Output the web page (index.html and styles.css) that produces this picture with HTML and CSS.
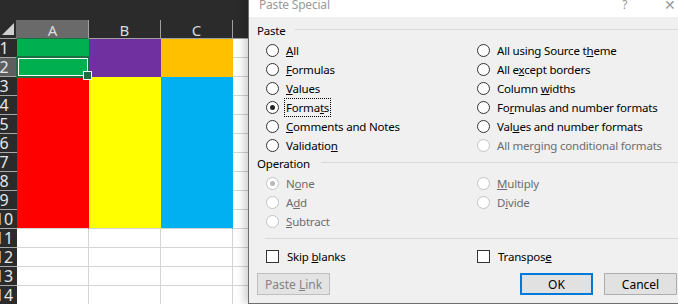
FILE: index.html
```html
<!DOCTYPE html>
<html lang="en">
  <head>
    <meta charset="UTF-8" />
    <title>Paste Special</title>
    <link rel="stylesheet" href="styles.css">
  </head>
  <body>
    <div class="app">
      <!-- 리본 아래 어두운 영역 -->
      <div class="topbar"></div>

      <!-- 시트 -->
      <div class="sheet">
        <div class="corner"></div>
        <div class="colhead sel">A</div>
        <div class="colhead">B</div>
        <div class="colhead">C</div>
        <div class="colhead"></div>

        <div class="rowhead"><span>1</span></div>
        <div class="cell green"></div>
        <div class="cell purple"></div>
        <div class="cell orange"></div>
        <div class="cell"></div>

        <div class="rowhead sel"><span>2</span></div>
        <div class="cell green active"></div>
        <div class="cell purple"></div>
        <div class="cell orange"></div>
        <div class="cell"></div>

        <div class="rowhead"><span>3</span></div>
        <div class="cell red"></div>
        <div class="cell yellow"></div>
        <div class="cell blue"></div>
        <div class="cell"></div>

        <div class="rowhead"><span>4</span></div>
        <div class="cell red"></div>
        <div class="cell yellow"></div>
        <div class="cell blue"></div>
        <div class="cell"></div>

        <div class="rowhead"><span>5</span></div>
        <div class="cell red"></div>
        <div class="cell yellow"></div>
        <div class="cell blue"></div>
        <div class="cell"></div>

        <div class="rowhead"><span>6</span></div>
        <div class="cell red"></div>
        <div class="cell yellow"></div>
        <div class="cell blue"></div>
        <div class="cell"></div>

        <div class="rowhead"><span>7</span></div>
        <div class="cell red"></div>
        <div class="cell yellow"></div>
        <div class="cell blue"></div>
        <div class="cell"></div>

        <div class="rowhead"><span>8</span></div>
        <div class="cell red"></div>
        <div class="cell yellow"></div>
        <div class="cell blue"></div>
        <div class="cell"></div>

        <div class="rowhead"><span>9</span></div>
        <div class="cell red"></div>
        <div class="cell yellow"></div>
        <div class="cell blue"></div>
        <div class="cell"></div>

        <div class="rowhead"><span>10</span></div>
        <div class="cell red last"></div>
        <div class="cell yellow last"></div>
        <div class="cell blue last"></div>
        <div class="cell"></div>

        <div class="rowhead"><span>11</span></div>
        <div class="cell"></div>
        <div class="cell"></div>
        <div class="cell"></div>
        <div class="cell"></div>

        <div class="rowhead"><span>12</span></div>
        <div class="cell"></div>
        <div class="cell"></div>
        <div class="cell"></div>
        <div class="cell"></div>

        <div class="rowhead"><span>13</span></div>
        <div class="cell"></div>
        <div class="cell"></div>
        <div class="cell"></div>
        <div class="cell"></div>

        <div class="rowhead"><span>14</span></div>
        <div class="cell"></div>
        <div class="cell"></div>
        <div class="cell"></div>
        <div class="cell"></div>
      </div>

      <!-- 선택하여 붙여넣기 대화상자 -->
      <div class="dialog">
        <div class="titlebar">
          <span class="title">Paste Special</span>
          <span class="help">?</span>
          <span class="close">✕</span>
        </div>
        <div class="body">
          <div class="group-title">Paste</div>
          <div class="options six">
            <div class="opt"><span class="radio"></span><span><u>A</u>ll</span></div>
            <div class="opt"><span class="radio"></span><span><u>F</u>ormulas</span></div>
            <div class="opt"><span class="radio"></span><span><u>V</u>alues</span></div>
            <div class="opt"><span class="radio on"></span><span class="focus">Forma<u>t</u>s</span></div>
            <div class="opt"><span class="radio"></span><span><u>C</u>omments and Notes</span></div>
            <div class="opt"><span class="radio"></span><span>Validatio<u>n</u></span></div>

            <div class="opt"><span class="radio"></span><span>All using Source t<u>h</u>eme</span></div>
            <div class="opt"><span class="radio"></span><span>All e<u>x</u>cept borders</span></div>
            <div class="opt"><span class="radio"></span><span>Column <u>w</u>idths</span></div>
            <div class="opt"><span class="radio"></span><span>Fo<u>r</u>mulas and number formats</span></div>
            <div class="opt"><span class="radio"></span><span>Val<u>u</u>es and number formats</span></div>
            <div class="opt off"><span class="radio"></span><span>All mer<u>g</u>ing conditional formats</span></div>
          </div>

          <div class="group-title op">Operation</div>
          <div class="options three">
            <div class="opt off"><span class="radio on"></span><span>N<u>o</u>ne</span></div>
            <div class="opt off"><span class="radio"></span><span>A<u>d</u>d</span></div>
            <div class="opt off"><span class="radio"></span><span><u>S</u>ubtract</span></div>

            <div class="opt off"><span class="radio"></span><span><u>M</u>ultiply</span></div>
            <div class="opt off"><span class="radio"></span><span>D<u>i</u>vide</span></div>
          </div>

          <div class="sep"></div>

          <div class="options one">
            <div class="opt"><span class="check"></span><span>Skip <u>b</u>lanks</span></div>
            <div class="opt"><span class="check"></span><span>Transpos<u>e</u></span></div>
          </div>

          <div class="buttons">
            <button class="btn" disabled>Paste <u>L</u>ink</button>
            <button class="btn ok">OK</button>
            <button class="btn">Cancel</button>
          </div>
        </div>
      </div>
    </div>
  </body>
</html>
```

FILE: styles.css
```css
* {
  box-sizing: border-box;
}
body {
  margin: 0;
  width: 678px;
  height: 304px;
  overflow: hidden;
  background: #2b2b2b;
  font-family: "Noto Sans", "Open Sans", sans-serif;
}
.app {
  position: relative;
  width: 678px;
  height: 304px;
  overflow: hidden;
}
.topbar {
  height: 20px;
  background: #2b2b2b;
}

/* 시트 그리드 */
.sheet {
  display: grid;
  grid-template-columns: 17px 72px 72px 72px 72px;
  grid-auto-rows: 19px;
  background: #fff;
}
.corner {
  background: #2b2b2b;
  border-bottom: 1px solid #a0a0a0;
  border-right: 1px solid #6a6a6a;
  position: relative;
}
.corner::after {
  content: "";
  position: absolute;
  right: 2px;
  bottom: 3px;
  border-style: solid;
  border-width: 0 0 12px 12px;
  border-color: transparent transparent #cfcfcf transparent;
}
.colhead {
  background: #2b2b2b;
  color: #dcdcdc;
  font-size: 15px;
  line-height: 20px;
  text-align: center;
  border-right: 1px solid #a0a0a0;
  border-bottom: 1px solid #a0a0a0;
}
.colhead.sel {
  background: #6a6a6a;
  border-bottom: 1px solid #1e6e42;
}
.rowhead {
  background: #2b2b2b;
  color: #e6e6e6;
  font-size: 16px;
  line-height: 18px;
  border-bottom: 1px solid #a8a8a8;
  overflow: hidden;
  white-space: nowrap;
}
.rowhead span {
  display: block;
  width: 26px;
  margin-left: -9px;
  text-align: center;
}
.rowhead.sel {
  background: #5e5e5e;
  border-right: 1px solid #1e6e42;
}
.cell {
  border-right: 1px solid #d4d4d4;
  border-bottom: 1px solid #d4d4d4;
}
.green { background: #00b050; border-color: #00b050; }
.purple { background: #7030a0; border-color: #7030a0; }
.orange { background: #ffc000; border-color: #ffc000; }
.red { background: #ff0000; border-color: #ff0000; }
.yellow { background: #ffff00; border-color: #ffff00; }
.blue { background: #00b0f0; border-color: #00b0f0; }
.cell.last {
  border-bottom-color: #d4d4d4;
}

/* 활성 셀 */
.active {
  position: relative;
}
.active::before {
  content: "";
  position: absolute;
  inset: -2px -2px -2px -1px;
  border: 2px solid #1e6e42;
  box-shadow: inset 0 0 0 1px #fff;
}
.active::after {
  content: "";
  position: absolute;
  right: -4px;
  bottom: -4px;
  width: 7px;
  height: 7px;
  background: #1e6e42;
  border: 1px solid #fff;
}

/* 대화상자 */
.dialog {
  position: absolute;
  left: 248px;
  top: -14px;
  width: 440px;
  background: #f0f0f0;
  border: 1px solid #6e6e6e;
  box-shadow: -4px 0 8px rgba(0, 0, 0, 0.18);
  font-size: 11.5px;
  letter-spacing: -0.2px;
  color: #000;
}
.titlebar {
  height: 30px;
  background: #fff;
  display: flex;
  align-items: center;
  padding: 4px 0 0 10px;
  color: #9a9a9a;
  font-size: 12px;
}
.title {
  flex: 1;
}
.help {
  margin-right: 37px;
}
.close {
  margin-right: 11px;
  font-size: 14px;
}
.body {
  padding: 5px 10px 8px 8px;
}
.group-title {
  display: flex;
  align-items: center;
  height: 16px;
}
.group-title::after {
  content: "";
  flex: 1;
  height: 1px;
  margin: -2px 0 0 9px;
  background: #d9d9d9;
  margin-right: -12px;
}
.group-title.op::after {
  margin-left: 11px;
}
.options {
  display: grid;
  grid-auto-flow: column;
  grid-template-columns: 211px 1fr;
  grid-auto-rows: 19px;
  padding-left: 9px;
}
.six {
  grid-template-rows: repeat(6, 19px);
  margin: 3px 0 0;
}
.three {
  grid-template-rows: repeat(3, 19px);
  margin-top: 3px;
}
.one {
  grid-template-rows: 19px;
}
.opt {
  display: flex;
  align-items: center;
  white-space: nowrap;
}
.radio {
  width: 13px;
  height: 13px;
  border: 1px solid #333;
  border-radius: 50%;
  background: #fff;
  margin-right: 7px;
  flex: none;
  position: relative;
}
.radio.on::after {
  content: "";
  position: absolute;
  left: 3px;
  top: 3px;
  width: 5px;
  height: 5px;
  border-radius: 50%;
  background: #222;
}
.off {
  color: #6d6d6d;
}
.off .radio {
  border-color: #c3c3c3;
}
.off .radio.on::after {
  background: #b9b9b9;
}
.focus {
  outline: 1px dotted #000;
  outline-offset: 1px;
}
.check {
  width: 13px;
  height: 13px;
  border: 1px solid #333;
  background: #fff;
  margin-right: 8px;
  flex: none;
}
.sep {
  height: 1px;
  background: #d9d9d9;
  margin: 7px -12px 8px 8px;
}
.buttons {
  display: flex;
  gap: 11px;
  margin-top: 7px;
}
.btn {
  width: 73px;
  height: 22px;
  font-family: inherit;
  font-size: 12px;
  background: #e1e1e1;
  border: 1px solid #adadad;
  color: #000;
  padding: 0;
}
.btn:disabled {
  color: #838383;
  border-color: #bfbfbf;
  background: #e3e3e3;
}
.btn.ok {
  margin-left: auto;
  border: 2px solid #0078d7;
}
```
